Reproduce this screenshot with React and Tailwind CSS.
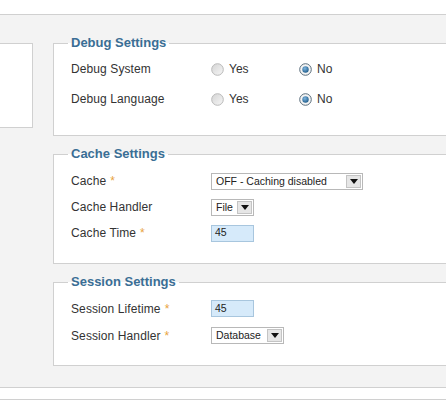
import React from "react";

const Radio = ({ checked }) => (
	<svg width="13" height="13" viewBox="0 0 13 13" className="shrink-0">
		<defs>
			<linearGradient id="rg-off" x1="0" y1="0" x2="1" y2="1">
				<stop offset="0" stopColor="#d4d4d4" />
				<stop offset="1" stopColor="#f7f7f7" />
			</linearGradient>
			<radialGradient id="rg-dot" cx="0.4" cy="0.35" r="0.7">
				<stop offset="0" stopColor="#7fb6e0" />
				<stop offset="1" stopColor="#1d5a88" />
			</radialGradient>
		</defs>
		{checked ? (
			<>
				<circle cx="6.5" cy="6.5" r="5.8" fill="#f4f4f4" stroke="#5b6e7c" strokeWidth="1" />
				<circle cx="6.5" cy="6.5" r="3.2" fill="url(#rg-dot)" />
			</>
		) : (
			<circle cx="6.5" cy="6.5" r="5.8" fill="url(#rg-off)" stroke="#b9b9b9" strokeWidth="1" />
		)}
	</svg>
);

const Select = ({ value, width }) => (
	<div
		className="flex items-center h-[17px] border border-[#b8b8b8] bg-white pl-[4px] pr-[1px]"
		style={{ width }}
	>
		<span className="text-[10.5px] leading-none text-[#222] whitespace-nowrap">{value}</span>
		<span className="ml-auto flex items-center justify-center w-[15px] h-[13px] border border-[#c4c4c4] bg-[#e6e6e6]">
			<svg width="8" height="5" viewBox="0 0 8 5">
				<path d="M0 0h8L4 5z" fill="#111" />
			</svg>
		</span>
	</div>
);

const Field = ({ value }) => (
	<div className="flex items-center w-[43px] h-[17px] border border-[#a8c6de] bg-[#d6eafa] pl-[3px] text-[10.5px] text-[#222]">
		{value}
	</div>
);

const Label = ({ children, req }) => (
	<div className="w-[140px] shrink-0 text-[12px] text-[#333] tracking-[0.1px] whitespace-nowrap">
		{children}
		{req && <span className="ml-[4px] text-[#e8a33d]">*</span>}
	</div>
);

const Fieldset = ({ title, className, children }) => (
	<fieldset className={`border border-[#d0d0d0] bg-white pl-[17px] min-w-0 ${className}`}>
		<legend className="-ml-[3px] px-[3px] text-[13px] leading-[16px] font-bold text-[#3a6e95]">
			{title}
		</legend>
		{children}
	</fieldset>
);

export default function App() {
	return (
		<div className="w-[446px] h-[405px] overflow-hidden bg-white font-['Liberation_Sans',Arial,sans-serif]">
			<div className="h-[15px] bg-white border-b border-[#d0d0d0]" />
			<div className="h-[373px] bg-[#f3f3f3] border-b border-[#d0d0d0] flex items-start pt-[20px]">
				{/* left panel */}
				<div className="mt-[8px] w-[33px] h-[85px] shrink-0 bg-white border border-l-0 border-[#d0d0d0]" />
				{/* right column */}
				<div className="ml-[20px] w-[420px] shrink-0 flex flex-col gap-[10px]">
					<Fieldset title="Debug Settings" className="pt-[3px] pb-[21px]">
						<div className="flex items-center h-[30px]">
							<Label>Debug System</Label>
							<div className="flex items-center w-[88px] gap-[5px] text-[12px] text-[#333]">
								<Radio /> Yes
							</div>
							<div className="flex items-center gap-[5px] text-[12px] text-[#333]">
								<Radio checked /> No
							</div>
						</div>
						<div className="flex items-center h-[30px]">
							<Label>Debug Language</Label>
							<div className="flex items-center w-[88px] gap-[5px] text-[12px] text-[#333]">
								<Radio /> Yes
							</div>
							<div className="flex items-center gap-[5px] text-[12px] text-[#333]">
								<Radio checked /> No
							</div>
						</div>
					</Fieldset>
					<Fieldset title="Cache Settings" className="pt-[6px] pb-[17px]">
						<div className="flex items-center h-[26px]">
							<Label req>Cache</Label>
							<Select value="OFF - Caching disabled" width={152} />
						</div>
						<div className="flex items-center h-[26px]">
							<Label>Cache Handler</Label>
							<Select value="File" width={43} />
						</div>
						<div className="flex items-center h-[26px]">
							<Label req>Cache Time</Label>
							<Field value="45" />
						</div>
					</Fieldset>
					<Fieldset title="Session Settings" className="pt-[5px] pb-[16px]">
						<div className="flex items-center h-[27px]">
							<Label req>Session Lifetime</Label>
							<Field value="45" />
						</div>
						<div className="flex items-center h-[27px]">
							<Label req>Session Handler</Label>
							<Select value="Database" width={73} />
						</div>
					</Fieldset>
				</div>
			</div>
			<div className="h-[12px] bg-white border-b border-[#d0d0d0]" />
		</div>
	);
}
